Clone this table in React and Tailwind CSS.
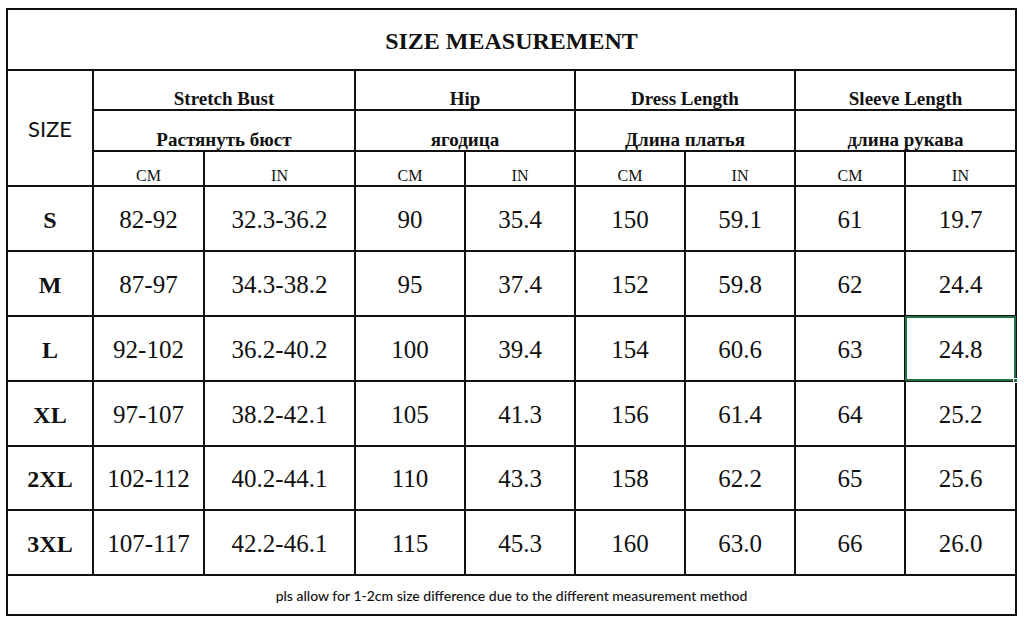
const groups = [
  { en: "Stretch Bust", ru: "Растянуть бюст" },
  { en: "Hip", ru: "ягодица" },
  { en: "Dress Length", ru: "Длина платья" },
  { en: "Sleeve Length", ru: "длина рукава" },
];

const rows = [
  ["S", "82-92", "32.3-36.2", "90", "35.4", "150", "59.1", "61", "19.7"],
  ["M", "87-97", "34.3-38.2", "95", "37.4", "152", "59.8", "62", "24.4"],
  ["L", "92-102", "36.2-40.2", "100", "39.4", "154", "60.6", "63", "24.8"],
  ["XL", "97-107", "38.2-42.1", "105", "41.3", "156", "61.4", "64", "25.2"],
  ["2XL", "102-112", "40.2-44.1", "110", "43.3", "158", "62.2", "65", "25.6"],
  ["3XL", "107-117", "42.2-46.1", "115", "45.3", "160", "63.0", "66", "26.0"],
];

const serif = "font-['Liberation_Serif','Times_New_Roman',serif]";
const sans = "font-['Lato','Open_Sans',sans-serif]";
const cell = "border-2 border-[#111] p-0 text-center";

export default function App() {
  return (
    <div className="w-[1024px] h-[624px] bg-white pl-[6px] pt-[8px] text-[#111]">
      <table className="border-collapse table-fixed w-[1009px]">
        <colgroup>
          <col className="w-[86px]" />
          <col className="w-[111px]" />
          <col className="w-[151px]" />
          <col className="w-[110px]" />
          <col className="w-[110px]" />
          <col className="w-[110px]" />
          <col className="w-[110px]" />
          <col className="w-[110px]" />
          <col className="w-[111px]" />
        </colgroup>
        <tbody>
          <tr className="h-[61px]">
            <td colSpan={9} className={`${cell} ${serif} font-bold text-[24px] pt-[3px]`}>
              SIZE MEASUREMENT
            </td>
          </tr>
          <tr className="h-[40px]">
            <td rowSpan={3} className={`${cell} ${sans} text-[22px]`}>
              SIZE
            </td>
            {groups.map((g) => (
              <td
                key={g.en}
                colSpan={2}
                className={`${cell} ${serif} font-bold text-[19px] leading-none align-bottom pb-[1px]`}
              >
                {g.en}
              </td>
            ))}
          </tr>
          <tr className="h-[41px]">
            {groups.map((g) => (
              <td
                key={g.ru}
                colSpan={2}
                className={`${cell} ${serif} font-bold text-[19px] leading-none align-bottom pb-[1px]`}
              >
                {g.ru}
              </td>
            ))}
          </tr>
          <tr className="h-[35px]">
            {groups.map((g) => [
              <td key={g.en + "cm"} className={`${cell} ${serif} text-[16px] leading-none align-bottom pb-[1px]`}>
                CM
              </td>,
              <td key={g.en + "in"} className={`${cell} ${serif} text-[16px] leading-none align-bottom pb-[1px]`}>
                IN
              </td>,
            ])}
          </tr>
          {rows.map((r) => (
            <tr key={r[0]} className={r[0] === "2XL" ? "h-[64px]" : "h-[65px]"}>
              <td className={`${cell} ${serif} font-bold text-[24px] pt-[2px]`}>{r[0]}</td>
              {r.slice(1).map((v, i) => (
                <td
                  key={i}
                  className={`${cell} ${serif} text-[25px] pt-[2px] ${
                    r[0] === "L" && i === 7 ? "relative" : ""
                  }`}
                >
                  {v}
                  {r[0] === "L" && i === 7 && (
                    <div className="absolute inset-[-1px] border-2 border-[#217346]">
                      <div className="absolute right-[-4px] bottom-[-4px] w-[5px] h-[5px] bg-[#217346] border border-white" />
                    </div>
                  )}
                </td>
              ))}
            </tr>
          ))}
          <tr className="h-[40px]">
            <td colSpan={9} className={`${cell} ${sans} text-[14px] font-medium`}>
              pls allow for 1-2cm size difference due to the different measurement method
            </td>
          </tr>
        </tbody>
      </table>
    </div>
  );
}
